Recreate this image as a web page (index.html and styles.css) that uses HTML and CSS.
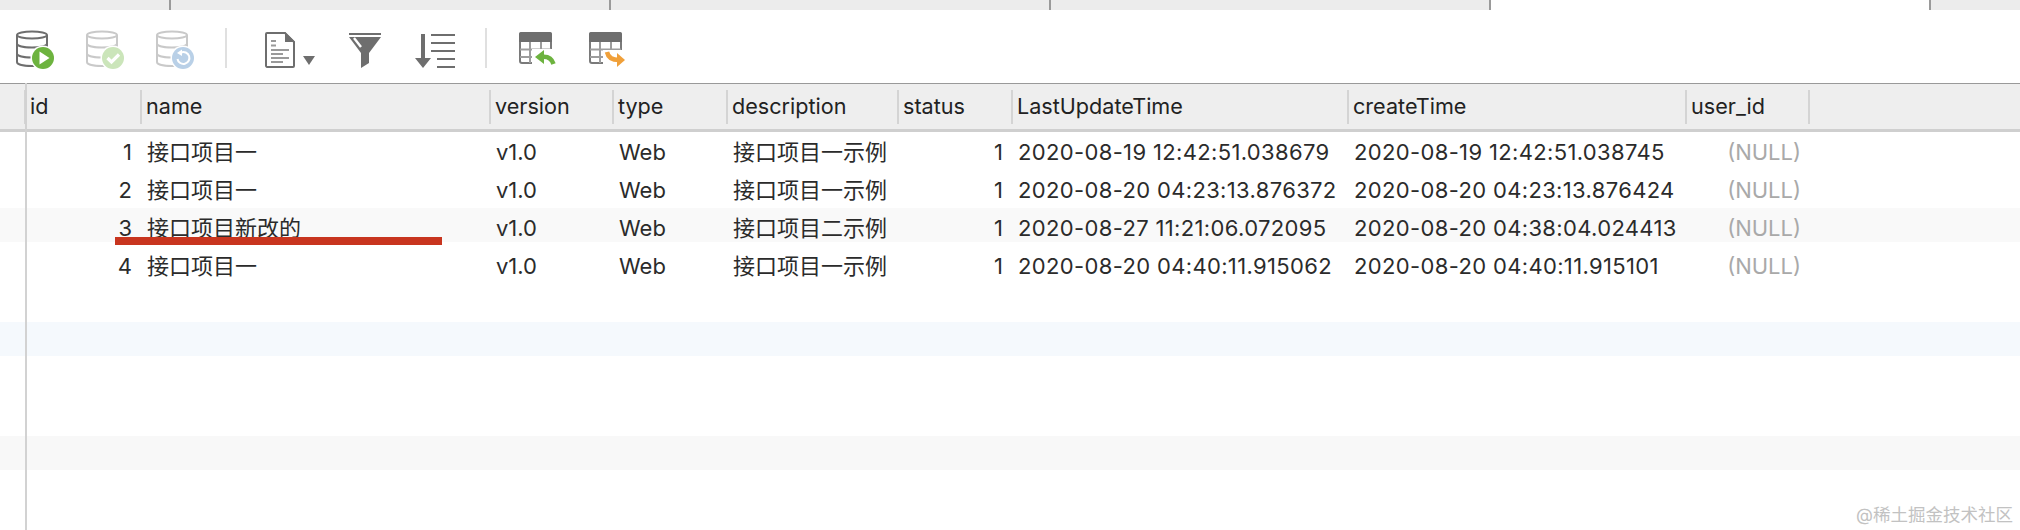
FILE: index.html
```html
<!DOCTYPE html>
<html lang="zh">
<head>
    <meta charset="UTF-8">
    <title>接口项目</title>
    <link rel="stylesheet" href="styles.css">
</head>
<body>
    <div class="window">

        <!-- Onglets -->
        <div class="tabs">
            <div class="tab tab-first"></div>
            <div class="tab tab-mid"></div>
            <div class="tab tab-mid"></div>
            <div class="tab tab-mid"></div>
            <div class="tab tab-active"></div>
            <div class="tab tab-last"></div>
        </div>

        <!-- Barre d'outils -->
        <div class="toolbar">
            <svg class="icon" width="40" height="40" viewBox="0 0 40 40">
                <g fill="none" stroke="#6e6e6e" stroke-width="2">
                    <ellipse cx="16" cy="5" rx="15" ry="3.6"/>
                    <path d="M1 5V32C1 34.5 8 36 16 36S31 34.5 31 32V5M1 13.5C1 16 8 17.5 16 17.5S31 16 31 13.5M1 23.5C1 26 8 27.5 16 27.5S31 26 31 23.5"/>
                </g>
                <circle cx="27" cy="28" r="12.5" fill="#fff"/>
                <circle cx="27" cy="28" r="11" fill="#6db33f"/>
                <path d="M23.5 21.5L33.5 28L23.5 34.5Z" fill="#fff"/>
            </svg>
            <svg class="icon" width="40" height="40" viewBox="0 0 40 40">
                <g fill="none" stroke="#c9c9c9" stroke-width="2">
                    <ellipse cx="16" cy="5" rx="15" ry="3.6"/>
                    <path d="M1 5V32C1 34.5 8 36 16 36S31 34.5 31 32V5M1 13.5C1 16 8 17.5 16 17.5S31 16 31 13.5M1 23.5C1 26 8 27.5 16 27.5S31 26 31 23.5"/>
                </g>
                <circle cx="27" cy="28" r="12.5" fill="#fff"/>
                <circle cx="27" cy="28" r="11" fill="#cbe5ba"/>
                <path d="M21.5 28L25.5 32L33 24.5" fill="none" stroke="#fff" stroke-width="3.2"/>
            </svg>
            <svg class="icon" width="40" height="40" viewBox="0 0 40 40">
                <g fill="none" stroke="#c9c9c9" stroke-width="2">
                    <ellipse cx="16" cy="5" rx="15" ry="3.6"/>
                    <path d="M1 5V32C1 34.5 8 36 16 36S31 34.5 31 32V5M1 13.5C1 16 8 17.5 16 17.5S31 16 31 13.5M1 23.5C1 26 8 27.5 16 27.5S31 26 31 23.5"/>
                </g>
                <circle cx="27" cy="28" r="12.5" fill="#fff"/>
                <circle cx="27" cy="28" r="11" fill="#b9d0e7"/>
                <path d="M25 22.5A6 6 0 1 1 21.5 29" fill="none" stroke="#fff" stroke-width="2"/>
                <path d="M26 19.5V26L21 23Z" fill="#fff"/>
            </svg>
            <div class="tool-sep"></div>
            <svg class="icon" width="60" height="40" viewBox="0 0 60 40">
                <path d="M9 3H27L36 12V36A1 1 0 0 1 35 37H9A1.5 1.5 0 0 1 8 36V4A1 1 0 0 1 9 3Z" fill="#fff" stroke="#6e6e6e" stroke-width="2"/>
                <path d="M27 2L37 12H27Z" fill="#6e6e6e"/>
                <path d="M13 11H18M13 15.500H18M13 20H31M13 24H25M13 28H31M13 32H25" stroke="#9a9a9a" stroke-width="2"/>
                <path d="M45 26H57L51 35Z" fill="#6e6e6e"/>
            </svg>
            <svg class="icon" width="36" height="40" viewBox="0 0 36 40">
                <path d="M1 3H33V5H1Z" fill="#6e6e6e"/>
                <path d="M1 7H33L21 23V33L13 38V23Z" fill="#6e6e6e"/>
                <path d="M6 8L13 17" stroke="#fff" stroke-width="2.400"/>
            </svg>
            <svg class="icon" width="42" height="40" viewBox="0 0 42 40">
                <path d="M7 4H11V28H17L9 38L1 28H7Z" fill="#6e6e6e"/>
                <path d="M17 5H41M17 13H41M17 21H41M23 29H41M23 37H41" stroke="#6e6e6e" stroke-width="2"/>
            </svg>
            <div class="tool-sep"></div>
            <svg class="icon" width="40" height="40" viewBox="0 0 40 40">
                <rect x="2" y="3" width="31" height="30" rx="2" fill="#fff" stroke="#7a7a7a" stroke-width="2"/>
                <path d="M1 12V4A2 2 0 0 1 3 2H32A2 2 0 0 1 34 4V12Z" fill="#6e6e6e"/>
                <path d="M12 12V33M23 12V33M2 19.500H33M2 27H33" stroke="#9d9d9d" stroke-width="2"/>
                <path d="M14 36V19H40V36Z" fill="#fff"/>
                <path d="M23 27C30 26 34 29 35.500 34" fill="none" stroke="#6db33f" stroke-width="4.500"/>
                <path d="M17 27L26 20V34Z" fill="#6db33f"/>
            </svg>
            <svg class="icon" width="40" height="40" viewBox="0 0 40 40">
                <rect x="2" y="3" width="31" height="30" rx="2" fill="#fff" stroke="#7a7a7a" stroke-width="2"/>
                <path d="M1 12V4A2 2 0 0 1 3 2H32A2 2 0 0 1 34 4V12Z" fill="#6e6e6e"/>
                <path d="M12 12V33M23 12V33M2 19.500H33M2 27H33" stroke="#9d9d9d" stroke-width="2"/>
                <path d="M15 20H40V38H15Z" fill="#fff"/>
                <path d="M19 22C20 27 24 30 31 30" fill="none" stroke="#f0a03a" stroke-width="4.500"/>
                <path d="M37 30L29 23V37Z" fill="#f0a03a"/>
            </svg>
        </div>

        <!-- Tableau -->
        <div class="table">
            <div class="gutter-line"></div>

            <div class="head cols">
                <div class="gutter"></div>
                <div class="th">id</div>
                <div class="th">name</div>
                <div class="th">version</div>
                <div class="th">type</div>
                <div class="th">description</div>
                <div class="th">status</div>
                <div class="th">LastUpdateTime</div>
                <div class="th">createTime</div>
                <div class="th">user_id</div>
            </div>

            <div class="rows">
                <div class="row cols">
                    <div class="gutter"></div>
                    <div class="td num">1</div>
                    <div class="td">接口项目一</div>
                    <div class="td">v1.0</div>
                    <div class="td">Web</div>
                    <div class="td">接口项目一示例</div>
                    <div class="td num">1</div>
                    <div class="td time">2020-08-19 12:42:51.038679</div>
                    <div class="td time">2020-08-19 12:42:51.038745</div>
                    <div class="td null">(NULL)</div>
                </div>
                <div class="row cols">
                    <div class="gutter"></div>
                    <div class="td num">2</div>
                    <div class="td">接口项目一</div>
                    <div class="td">v1.0</div>
                    <div class="td">Web</div>
                    <div class="td">接口项目一示例</div>
                    <div class="td num">1</div>
                    <div class="td time">2020-08-20 04:23:13.876372</div>
                    <div class="td time">2020-08-20 04:23:13.876424</div>
                    <div class="td null">(NULL)</div>
                </div>
                <div class="row cols row-grey">
                    <div class="gutter"></div>
                    <div class="td num">3</div>
                    <div class="td">接口项目新改的</div>
                    <div class="td">v1.0</div>
                    <div class="td">Web</div>
                    <div class="td">接口项目二示例</div>
                    <div class="td num">1</div>
                    <div class="td time">2020-08-27 11:21:06.072095</div>
                    <div class="td time">2020-08-20 04:38:04.024413</div>
                    <div class="td null">(NULL)</div>
                    <div class="red-line"></div>
                </div>
                <div class="row cols">
                    <div class="gutter"></div>
                    <div class="td num">4</div>
                    <div class="td">接口项目一</div>
                    <div class="td">v1.0</div>
                    <div class="td">Web</div>
                    <div class="td">接口项目一示例</div>
                    <div class="td num">1</div>
                    <div class="td time">2020-08-20 04:40:11.915062</div>
                    <div class="td time">2020-08-20 04:40:11.915101</div>
                    <div class="td null">(NULL)</div>
                </div>
                <div class="row cols"></div>
                <div class="row cols row-blue"></div>
                <div class="row cols"></div>
                <div class="row cols"></div>
                <div class="row cols row-light"></div>
            </div>
        </div>

        <div class="watermark">@稀土掘金技术社区</div>
    </div>
</body>
</html>
```

FILE: styles.css
```css
html, body {
    margin: 0;
    height: 100%;
    background: #ffffff;
}

.window {
    position: relative;
    width: 2020px;
    height: 530px;
    overflow: hidden;
    font-family: Inter, "Noto Sans CJK SC", sans-serif;
    font-size: 22px;
    color: #2b2b2b;
}

/* Onglets */
.tabs {
    display: flex;
    height: 10px;
}

.tab {
    background-color: #ececec;
    border-right: 2px solid #9a9a9a;
    box-sizing: border-box;
}

.tab-first { width: 171px; }
.tab-mid { width: 440px; }
.tab-active { width: 440px; background-color: #ffffff; }
.tab-last { flex: 1; border-right: none; }

/* Barre d'outils */
.toolbar {
    display: flex;
    align-items: center;
    gap: 30px;
    height: 73px;
    padding: 7px 0 0 16px;
    box-sizing: border-box;
    background: #ffffff;
}

.icon {
    flex: none;
    display: block;
}

.tool-sep {
    flex: none;
    width: 2px;
    height: 40px;
    margin: -4px 1px 0 -1px;
    background-color: #e0e0e0;
}

/* Tableau */
.table {
    position: relative;
}

.cols {
    display: grid;
    grid-template-columns: 24px 116px 349px 123px 114px 171px 114px 336px 338px 125px;
}

.gutter-line {
    position: absolute;
    left: 25px;
    top: 0;
    width: 2px;
    height: 447px;
    background-color: #d2d2d2;
    z-index: 2;
}

.head {
    height: 49px;
    box-sizing: border-box;
    align-items: center;
    background-color: #eeeeee;
    border-top: 1px solid #999999;
    border-bottom: 3px solid #cfcfcf;
    color: #222222;
}

.th {
    height: 34px;
    font-size: 21.600px;
    line-height: 32px;
    padding-left: 4px;
    border-left: 2px solid #d4d4d4;
}

.th:last-child {
    border-right: 2px solid #d4d4d4;
}

.rows {
    display: flex;
    flex-direction: column;
    gap: 4px;
}

.row {
    position: relative;
    height: 34px;
    line-height: 40px;
    white-space: nowrap;
}

.row-grey { background-color: #f9f9f9; }
.row-blue { background-color: #f5f9fd; }
.row-light { background-color: #f8f8f8; }

.td {
    padding-left: 7px;
}

.time {
    letter-spacing: 0.35px;
}

.num {
    padding: 0 8px 0 0;
    text-align: right;
}

.null {
    padding: 0 9px 0 0;
    text-align: right;
    color: #a9a9a9;
}

/* Trait rouge par-dessus la ligne 3 */
.red-line {
    position: absolute;
    left: 115px;
    top: 29px;
    width: 327px;
    height: 8px;
    background-color: #c8351f;
}

.watermark {
    position: absolute;
    right: 7px;
    bottom: 4px;
    font-size: 17.500px;
    color: #c2c2c2;
}
```
